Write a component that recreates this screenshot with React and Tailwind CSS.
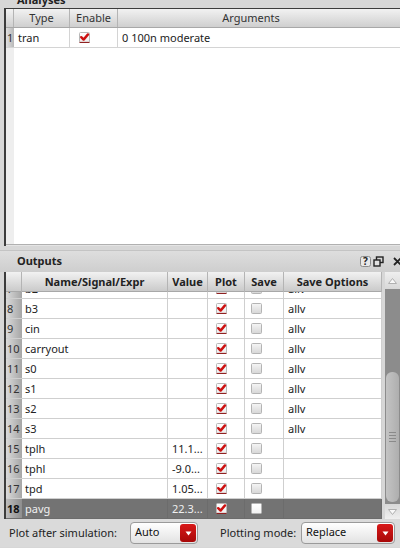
import React from "react";

const Check = ({ on, bright }) => (
  <svg width="11" height="11" viewBox="0 0 11 11" className="block">
    <defs>
      <linearGradient id={on ? "cbOn" : bright ? "cbBr" : "cbOff"} x1="0" y1="0" x2="0" y2="1">
        <stop offset="0" stopColor={bright ? "#ffffff" : on ? "#ffffff" : "#f6f6f6"} />
        <stop offset="1" stopColor={bright ? "#f2f2f2" : on ? "#ececec" : "#d6d6d6"} />
      </linearGradient>
    </defs>
    <rect x="0.5" y="0.5" width="10" height="10" rx="1" fill={`url(#${on ? "cbOn" : bright ? "cbBr" : "cbOff"})`} stroke={on ? "#b8b8b8" : "#b4b4b4"} />
    {on && (
      <>
        <path d="M2.2 5.2 L4.6 7.6 L9 2.4" fill="none" stroke="#cc1010" strokeWidth="2.4" strokeLinecap="round" strokeLinejoin="round" />
        <line x1="0.5" y1="10.4" x2="10.5" y2="10.4" stroke="#8a1010" strokeWidth="1" />
      </>
    )}
  </svg>
);

const Combo = ({ label, width }) => (
  <div className={`flex h-[22px] items-stretch rounded-[4px] border border-[#9a9a9a] bg-gradient-to-b from-[#ffffff] to-[#e2e2e2] ${width}`}>
    <span className="flex-1 pl-[4px] leading-[18px] text-[#111]">{label}</span>
    <span className="m-[1px] flex w-[16px] items-center justify-center rounded-[3px] bg-gradient-to-b from-[#d81818] to-[#a80808]">
      <svg width="7" height="5" viewBox="0 0 7 5">
        <path d="M0.5 0.5 L6.5 0.5 L3.5 4.5 Z" fill="#fff" />
      </svg>
    </span>
  </div>
);

const rows = [
  { n: 7, name: "b2", val: "", opt: "allv" },
  { n: 8, name: "b3", val: "", opt: "allv" },
  { n: 9, name: "cin", val: "", opt: "allv" },
  { n: 10, name: "carryout", val: "", opt: "allv" },
  { n: 11, name: "s0", val: "", opt: "allv" },
  { n: 12, name: "s1", val: "", opt: "allv" },
  { n: 13, name: "s2", val: "", opt: "allv" },
  { n: 14, name: "s3", val: "", opt: "allv" },
  { n: 15, name: "tplh", val: "11.1...", opt: "" },
  { n: 16, name: "tphl", val: "-9.0...", opt: "" },
  { n: 17, name: "tpd", val: "1.05...", opt: "" },
  { n: 18, name: "pavg", val: "22.3...", opt: "", sel: true },
];

const TitleIcons = () => (
  <div className="-mr-[3px] flex items-center gap-[2px]">
    <svg width="11" height="11" viewBox="0 0 11 11">
      <rect x="0.5" y="0.5" width="10" height="10" rx="2" fill="#e8e8e8" stroke="#8c8c8c" />
      <text x="5.5" y="9" textAnchor="middle" fontSize="10" fontWeight="bold" fill="#222" fontFamily="Noto Sans">?</text>
    </svg>
    <svg width="11" height="11" viewBox="0 0 11 11">
      <rect x="3.5" y="1" width="6.5" height="5.5" fill="none" stroke="#222" strokeWidth="1.4" />
      <rect x="1" y="4" width="6" height="6" fill="#e0e0e0" stroke="#222" strokeWidth="1.4" />
    </svg>
    <svg width="11" height="11" viewBox="0 0 11 11" className="ml-[6px]">
      <path d="M2 2 L9 9 M9 2 L2 9" stroke="#222" strokeWidth="1.8" />
    </svg>
  </div>
);

export default function App() {
  return (
    <div className="flex h-[548px] w-[400px] flex-col overflow-hidden bg-[#d7d7d7] font-['Noto_Sans',sans-serif] text-[11px] text-[#222]">
      {/* Analyses dock */}
      <div className="-mt-[9px] flex h-[17px] items-center justify-between pl-[17px] leading-none">
        <span className="font-bold">Analyses</span>
      </div>
      <div className="ml-[4px] flex h-[238px] flex-col border-l-2 border-t border-[#3c3c3c] bg-white">
        <div className="grid h-[19px] grid-cols-[8px_56px_48px_266px_1fr] border-b border-[#a8a8a8] bg-gradient-to-b from-[#f2f2f2] to-[#cfcfcf] text-[#333]">
          <div className="border-r border-[#b4b4b4]" />
          <div className="border-r border-[#b4b4b4] text-center leading-[18px]">Type</div>
          <div className="border-r border-[#b4b4b4] text-center leading-[18px]">Enable</div>
          <div className="text-center leading-[18px]">Arguments</div>
          <div />
        </div>
        <div className="grid h-[20px] grid-cols-[8px_56px_48px_1fr] border-b border-[#d4d4d4]">
          <div className="bg-gradient-to-r from-[#e0e0e0] to-[#b8b8b8] pl-[1px] leading-[19px] text-[#333]">1</div>
          <div className="border-r border-[#d4d4d4] pl-[4px] leading-[19px]">tran</div>
          <div className="flex items-center border-r border-[#d4d4d4] pl-[9px]">
            <Check on />
          </div>
          <div className="pl-[4px] leading-[19px]">0 100n moderate</div>
        </div>
        <div className="flex flex-1">
          <div className="w-[8px] bg-[#eeeeee]" />
          <div className="flex-1" />
        </div>
        <div className="h-[2px] border-t border-[#b0b0b0] bg-[#e4e4e4]" />
      </div>

      {/* Outputs dock */}
      <div className="mt-[4px] flex h-[22px] items-center justify-between border-t border-[#c4c4c4] bg-gradient-to-b from-[#dedede] to-[#cecece] pl-[17px]">
        <span className="font-bold">Outputs</span>
        <TitleIcons />
      </div>
      <div className="flex flex-1 flex-col">
        <div className="flex h-[247px]">
          <div className="ml-[4px] flex w-[378px] flex-col border-l-2 border-[#3c3c3c] bg-white">
            <div className="grid h-[20px] shrink-0 grid-cols-[16px_146px_40px_37px_39px_98px] border-b border-[#a8a8a8] bg-gradient-to-b from-[#f2f2f2] to-[#cacaca] font-bold leading-[20px]">
              <div className="border-r border-[#b4b4b4]" />
              <div className="border-r border-[#b4b4b4] text-center">Name/Signal/Expr</div>
              <div className="border-r border-[#b4b4b4] text-center">Value</div>
              <div className="border-r border-[#b4b4b4] text-center">Plot</div>
              <div className="border-r border-[#b4b4b4] text-center">Save</div>
              <div className="border-r border-[#b4b4b4] text-center">Save Options</div>
            </div>
            <div className="flex-1 overflow-hidden">
              <div className="-mt-[13px]">
                {rows.map((r) => (
                  <div
                    key={r.n}
                    className={`grid h-[20px] grid-cols-[16px_146px_40px_37px_39px_98px] border-b ${
                      r.sel ? "border-[#6c6c6c] bg-[#737373] text-[#f0f0f0]" : "border-[#cfcfcf]"
                    }`}
                  >
                    <div
                      className={`pl-[1px] leading-[19px] ${
                        r.sel
                          ? "bg-gradient-to-r from-[#bdbdbd] to-[#8e8e8e] font-bold text-[#111]"
                          : "bg-gradient-to-r from-[#dadada] to-[#a6a6a6] text-[#333]"
                      }`}
                    >
                      {r.n}
                    </div>
                    <div className={`border-r pl-[3px] leading-[19px] ${r.sel ? "border-[#6c6c6c]" : "border-[#cfcfcf]"}`}>{r.name}</div>
                    <div className={`border-r pl-[4px] leading-[19px] ${r.sel ? "border-[#6c6c6c]" : "border-[#cfcfcf]"}`}>{r.val}</div>
                    <div className={`flex items-center border-r pl-[8px] ${r.sel ? "border-[#6c6c6c]" : "border-[#cfcfcf]"}`}>
                      <Check on />
                    </div>
                    <div className={`flex items-center border-r pl-[6px] ${r.sel ? "border-[#6c6c6c]" : "border-[#cfcfcf]"}`}>
                      <Check bright={r.sel} />
                    </div>
                    <div className={`border-r pl-[4px] leading-[19px] ${r.sel ? "border-[#6c6c6c]" : "border-[#cfcfcf]"}`}>{r.opt}</div>
                  </div>
                ))}
              </div>
            </div>
          </div>
          {/* scrollbar */}
          <div className="ml-[3px] flex w-[15px] flex-col bg-[#8c8c8c]">
            <div className="flex h-[17px] items-center justify-center bg-gradient-to-b from-[#efefef] to-[#d8d8d8]">
              <svg width="9" height="6" viewBox="0 0 9 6">
                <path d="M0.5 5.5 L4.5 0.5 L8.5 5.5 Z" fill="#f8f8f8" stroke="#b0b0b0" />
              </svg>
            </div>
            <div className="h-[83px]" />
            <div className="mx-[1px] flex flex-1 items-center justify-center rounded-[6px] bg-gradient-to-r from-[#c4c4c4] to-[#aeaeae]">
              <div className="flex w-[7px] flex-col gap-[2px]">
                <div className="h-[1px] bg-[#8a8a8a]" />
                <div className="h-[1px] bg-[#8a8a8a]" />
                <div className="h-[1px] bg-[#8a8a8a]" />
                <div className="h-[1px] bg-[#8a8a8a]" />
              </div>
            </div>
            <div className="mt-[2px] flex h-[15px] items-center justify-center bg-gradient-to-b from-[#d8d8d8] to-[#efefef]">
              <svg width="9" height="6" viewBox="0 0 9 6">
                <path d="M0.5 0.5 L4.5 5.5 L8.5 0.5 Z" fill="#f8f8f8" stroke="#b0b0b0" />
              </svg>
            </div>
          </div>
        </div>
        {/* bottom bar */}
        <div className="flex h-[28px] items-center bg-[#dadada] pl-[9px]">
          <span className="w-[121px]">Plot after simulation:</span>
          <Combo label="Auto" width="w-[68px]" />
          <span className="ml-[22px] w-[81px]">Plotting mode:</span>
          <Combo label="Replace" width="w-[94px]" />
        </div>
      </div>
    </div>
  );
}
